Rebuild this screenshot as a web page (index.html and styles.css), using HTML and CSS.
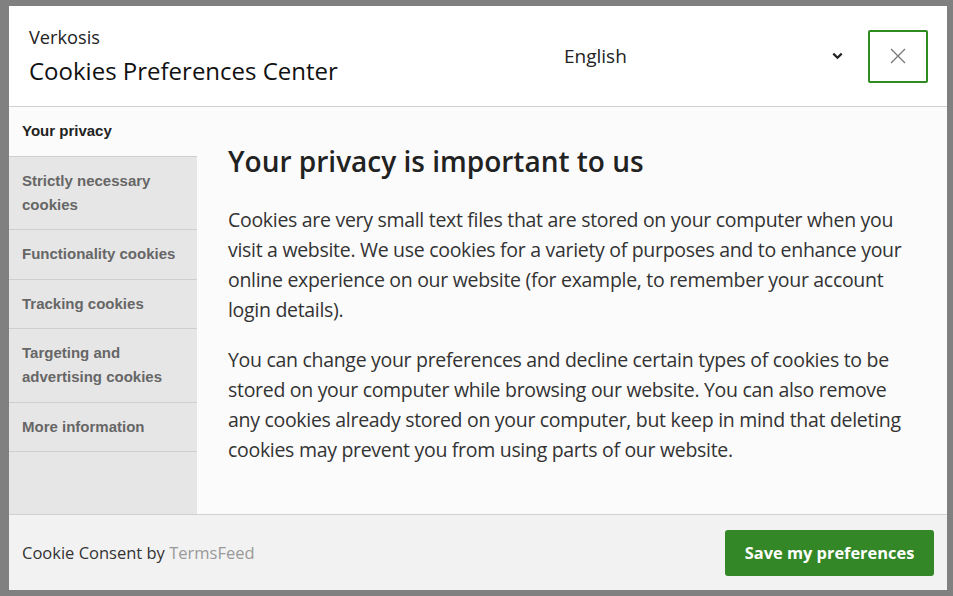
FILE: index.html
```html
<!DOCTYPE html>
<html lang="en">
<head>
<meta charset="utf-8">
<title>Cookies Preferences Center</title>
<link rel="stylesheet" href="styles.css">
</head>
<body>
<div class="modal">
  <header class="head">
    <div class="titles">
      <div class="brand">Verkosis</div>
      <div class="title">Cookies Preferences Center</div>
    </div>
    <div class="lang">
      <span class="lang-text">English</span>
      <svg class="chev" width="11" height="8" viewBox="0 0 11 8"><path d="M1.3 1.6 L5.5 5.8 L9.7 1.6" fill="none" stroke="#222" stroke-width="2.2"/></svg>
    </div>
    <button class="close" type="button" aria-label="Close">
      <svg width="16" height="16" viewBox="0 0 16 16"><path d="M1 1 L15 15 M15 1 L1 15" stroke="#777" stroke-width="1.3" fill="none"/></svg>
    </button>
  </header>
  <div class="body">
    <nav class="side">
      <div class="item active">Your privacy</div>
      <div class="item">Strictly necessary cookies</div>
      <div class="item">Functionality cookies</div>
      <div class="item">Tracking cookies</div>
      <div class="item">Targeting and advertising cookies</div>
      <div class="item">More information</div>
    </nav>
    <main class="main">
      <h1 class="h">Your privacy is important to us</h1>
      <p class="p">Cookies are very small text files that are stored on your computer when you visit a website. We use cookies for a variety of purposes and to enhance your online experience on our website (for example, to remember your account login details).</p>
      <p class="p">You can change your preferences and decline certain types of cookies to be stored on your computer while browsing our website. You can also remove any cookies already stored on your computer, but keep in mind that deleting cookies may prevent you from using parts of our website.</p>
    </main>
  </div>
  <footer class="foot">
    <div class="credit">Cookie Consent by <span class="tf">TermsFeed</span></div>
    <button class="save" type="button">Save my preferences</button>
  </footer>
</div>
</body>
</html>
```
FILE: styles.css
```css
html, body { margin: 0; padding: 0; }
body {
  background: #808080;
  font-family: "Open Sans", "Noto Sans", sans-serif;
  width: 953px;
  height: 596px;
  overflow: hidden;
}
.modal {
  margin: 6px 0 0 9px;
  width: 938px;
  height: 584px;
  background: #fff;
  display: flex;
  flex-direction: column;
}
.head {
  height: 100px;
  border-bottom: 1px solid #d0d0d0;
  display: flex;
  align-items: center;
  padding: 0 19px 0 20px;
  flex: none;
}
.titles { flex: 1; }
.brand {
  font-size: 18.2px;
  color: #222;
  line-height: 24px;
  margin-top: -1px;
}
.title {
  font-size: 24px;
  color: #111;
  line-height: 32px;
  margin-top: 6px;
}
.lang {
  width: 288px;
  display: flex;
  align-items: center;
  justify-content: space-between;
  margin-right: 16px;
  padding-bottom: 1px;
}
.lang-text { font-size: 19px; color: #222; }
.chev { margin-right: 9px; }
.close {
  width: 60px;
  height: 53px;
  border: 2px solid #2e8b1f;
  border-radius: 2px;
  background: #fff;
  display: flex;
  align-items: center;
  justify-content: center;
  padding: 0;
}
.body {
  flex: 1;
  display: flex;
  min-height: 0;
  background: #fbfbfb;
}
.side {
  width: 188px;
  background: #e6e6e6;
  flex: none;
}
.item {
  font-family: "Liberation Sans", Arial, sans-serif;
  font-weight: bold;
  font-size: 15px;
  line-height: 24px;
  color: #666;
  padding: 12px 13px 12.5px 13px;
  border-bottom: 1px solid #cfcfcf;
}
.item.active { background: #fbfbfb; color: #222; }
.main {
  flex: 1;
  padding: 0 30px 0 31px;
}
.h {
  margin: 34px 0 0;
  font-size: 28px;
  font-weight: 600;
  line-height: 40px;
  color: #222;
}
.p {
  margin: 20px 0 0;
  font-size: 19.5px;
  letter-spacing: -0.3px;
  line-height: 30px;
  color: #333;
}
.h + .p { margin-top: 24px; }
.foot {
  height: 75px;
  border-top: 1px solid #d0d0d0;
  background: #f2f2f2;
  display: flex;
  align-items: center;
  justify-content: space-between;
  padding: 0 13px;
  flex: none;
}
.credit { font-size: 16.5px; color: #333; }
.tf { color: #999; }
.save {
  width: 209px;
  height: 46px;
  border: 0;
  border-radius: 3px;
  background: #338726;
  color: #fff;
  font-family: "Open Sans", sans-serif;
  font-weight: 700;
  font-size: 16.4px;
  padding: 0;
}
```
